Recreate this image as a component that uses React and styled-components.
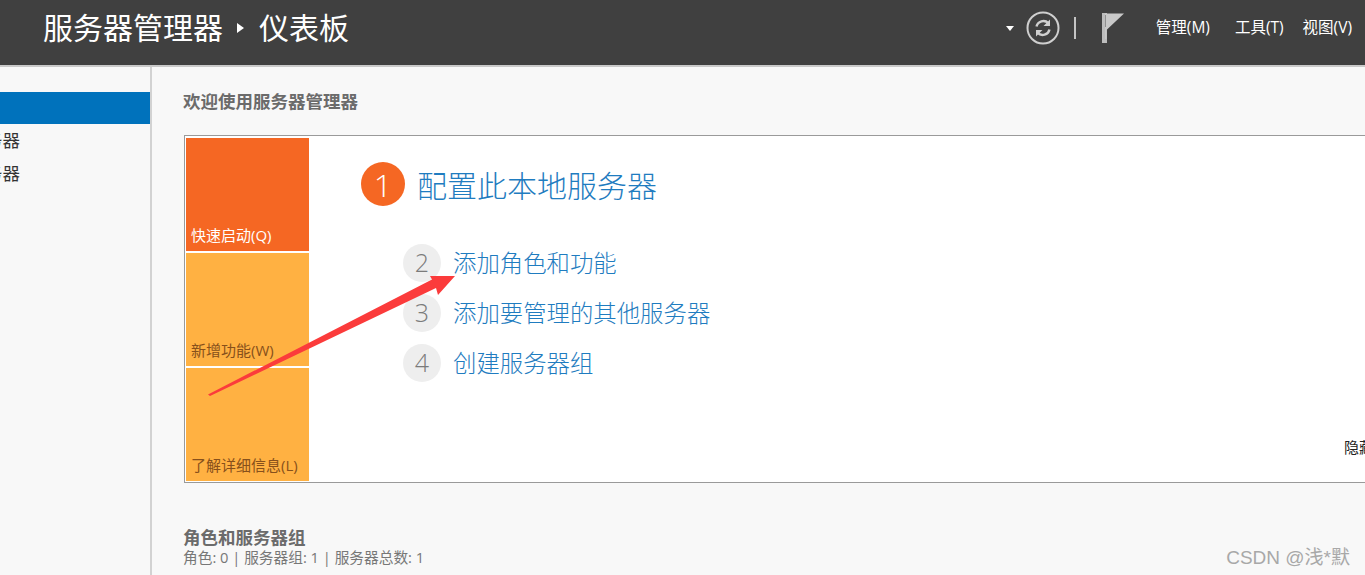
import React from 'react';
import styled, { createGlobalStyle } from 'styled-components';

const Global = createGlobalStyle`
  html, body { margin: 0; padding: 0; overflow: hidden; background: #f8f8f8; }
  body { font-family: "Open Sans", "Noto Sans CJK SC", sans-serif; }
`;

const Page = styled.div`
  position: relative;
  width: 1365px;
  height: 575px;
  overflow: hidden;
  display: flex;
  flex-direction: column;
`;

const Header = styled.header`
  flex: none;
  height: 55px;
  background: #404040;
  border-bottom: 2px solid #c9c9c9;
  display: flex;
  align-items: center;
  padding: 0 13px 10px 43px;
  color: #fff;
`;

const Crumb = styled.div`
  display: flex;
  align-items: center;
  font-size: 30px;
  line-height: 40px;
`;

const CrumbArrow = styled.span`
  width: 0;
  height: 0;
  margin: 0 15px 0 14px;
  border-left: 7px solid #fff;
  border-top: 5px solid transparent;
  border-bottom: 5px solid transparent;
`;

const Tools = styled.div`
  margin-left: auto;
  display: flex;
  align-items: center;
`;

const Caret = styled.span`
  width: 0;
  height: 0;
  margin: 2px 12px 0 0;
  border-top: 5px solid #fff;
  border-left: 4.5px solid transparent;
  border-right: 4.5px solid transparent;
`;

const Divider = styled.span`
  width: 2px;
  height: 22px;
  margin: 0 26px 0 14px;
  background: #c4c4c4;
`;

const Menu = styled.span`
  font-size: 15.5px;
  line-height: 20px;
  padding-bottom: 2px;
  color: #fff;
  white-space: nowrap;
  margin-left: ${({ $gap }) => $gap}px;
`;

const Body = styled.div`
  flex: 1;
  min-height: 0;
  display: flex;
`;

const Sidebar = styled.nav`
  flex: none;
  width: 150px;
  border-right: 2px solid #d2d2d2;
  padding-top: 25px;
  overflow: hidden;
`;

const NavRow = styled.div`
  height: ${({ $active }) => ($active ? 32 : 33)}px;
  padding: 0 130px 2px 0;
  box-sizing: border-box;
  display: flex;
  align-items: center;
  justify-content: flex-end;
  font-size: 17.5px;
  color: #333;
  white-space: nowrap;
  background: ${({ $active }) => ($active ? '#0072bc' : 'transparent')};
`;

const Main = styled.main`
  flex: 1;
  min-width: 0;
  padding: 22px 0 0 32px;
  overflow: hidden;
`;

const SectionTitle = styled.h2`
  margin: 0 0 0 -1px;
  font-size: 17.5px;
  line-height: 24px;
  font-weight: 700;
  color: #6b6b6b;
`;

const Card = styled.section`
  width: 1300px;
  height: 344px;
  margin: 22px 0 43px;
  padding: 2px 0 0 1px;
  background: #fff;
  border: 1px solid #9a9a9a;
  display: flex;
`;

const Tiles = styled.div`
  flex: none;
  width: 123px;
  display: flex;
  flex-direction: column;
  gap: 2px;
`;

const Tile = styled.div`
  height: 113px;
  box-sizing: border-box;
  padding: 0 0 6px 5px;
  display: flex;
  align-items: flex-end;
  font-size: 15px;
  line-height: 20px;
  white-space: nowrap;
  background: ${({ $primary }) => ($primary ? '#f56723' : '#ffb142')};
  color: ${({ $primary }) => ($primary ? '#fff' : '#87501b')};
`;

const Content = styled.div`
  flex: 1;
  padding: 24px 0 0 52px;
`;

const Lead = styled.div`
  display: flex;
  align-items: flex-start;
  gap: 12px;
  margin-bottom: 36px;
`;

const LeadNumber = styled.span`
  width: 44px;
  height: 44px;
  border-radius: 50%;
  background: #f56723;
  color: #fff;
  display: flex;
  align-items: center;
  justify-content: center;
  font-size: 32px;
  font-weight: 300;
`;

const LeadText = styled.span`
  font-size: 30px;
  line-height: 44px;
  margin-top: 2px;
  font-weight: 300;
  color: #1f7cc0;
`;

const Steps = styled.div`
  display: flex;
  flex-direction: column;
  gap: 12px;
  margin-left: 42px;
`;

const Step = styled.div`
  display: flex;
  align-items: center;
  gap: 12px;
  height: 38px;
`;

const StepNumber = styled.span`
  width: 38px;
  height: 38px;
  box-sizing: border-box;
  padding-bottom: 3px;
  border-radius: 50%;
  background: #eeeeee;
  color: #7b7b7b;
  display: flex;
  align-items: center;
  justify-content: center;
  font-size: 25px;
  font-weight: 300;
`;

const StepText = styled.span`
  font-size: 23.4px;
  line-height: 38px;
  font-weight: 300;
  color: #1f7cc0;
  white-space: nowrap;
`;

const HideLink = styled.div`
  margin: 55px 0 0 983px;
  font-size: 15px;
  line-height: 20px;
  color: #222;
  white-space: nowrap;
`;

const GroupTitle = styled(SectionTitle)`
  line-height: 23px;
`;

const GroupStats = styled.div`
  margin-left: -1px;
  font-size: 14.7px;
  line-height: 16px;
  color: #777;
  white-space: nowrap;
`;

const Annotation = styled.svg`
  position: absolute;
  left: 0;
  top: 0;
  pointer-events: none;
`;

const Watermark = styled.div`
  position: absolute;
  right: 15px;
  bottom: 5px;
  font-size: 19px;
  line-height: 24px;
  font-family: "Liberation Sans", "Noto Sans CJK SC", sans-serif;
  color: #a8a8a8;
`;

function RefreshIcon() {
  return (
    <svg width="34" height="34" viewBox="0 0 34 34" fill="none">
      <circle cx="17" cy="17" r="15.5" stroke="#cfcfcf" strokeWidth="2" />
      <path d="M10.5 15.5a7 7 0 0 1 11.8-3.4" stroke="#cfcfcf" strokeWidth="2.4" />
      <path d="M23.5 18.5a7 7 0 0 1-11.8 3.4" stroke="#cfcfcf" strokeWidth="2.4" />
      <path d="M24 8.5v6.5h-6.5z" fill="#cfcfcf" />
      <path d="M10 25.5V19h6.5z" fill="#cfcfcf" />
    </svg>
  );
}

function FlagIcon() {
  return (
    <svg width="22" height="30" viewBox="0 0 22 30">
      <rect x="0" y="0" width="5" height="30" fill="#bdbdbd" />
      <path d="M3 0.5H22L4.5 17V26H3z" fill="#c9c9c9" />
      <rect x="3" y="2" width="1" height="12" fill="#8f8f8f" />
    </svg>
  );
}

const steps = [
  ['2', '添加角色和功能'],
  ['3', '添加要管理的其他服务器'],
  ['4', '创建服务器组'],
];

export default function App() {
  return (
    <Page>
      <Global />
      <Header>
        <Crumb>
          服务器管理器
          <CrumbArrow />
          仪表板
        </Crumb>
        <Tools>
          <Caret />
          <RefreshIcon />
          <Divider />
          <FlagIcon />
          <Menu $gap={32}>管理(M)</Menu>
          <Menu $gap={25}>工具(T)</Menu>
          <Menu $gap={19}>视图(V)</Menu>
        </Tools>
      </Header>
      <Body>
        <Sidebar>
          <NavRow $active />
          <NavRow>本地服务器</NavRow>
          <NavRow>所有服务器</NavRow>
        </Sidebar>
        <Main>
          <SectionTitle>欢迎使用服务器管理器</SectionTitle>
          <Card>
            <Tiles>
              <Tile $primary>快速启动(Q)</Tile>
              <Tile>新增功能(W)</Tile>
              <Tile>了解详细信息(L)</Tile>
            </Tiles>
            <Content>
              <Lead>
                <LeadNumber>1</LeadNumber>
                <LeadText>配置此本地服务器</LeadText>
              </Lead>
              <Steps>
                {steps.map(([n, label]) => (
                  <Step key={n}>
                    <StepNumber>{n}</StepNumber>
                    <StepText>{label}</StepText>
                  </Step>
                ))}
              </Steps>
              <HideLink>隐藏欢迎屏幕</HideLink>
            </Content>
          </Card>
          <GroupTitle>角色和服务器组</GroupTitle>
          <GroupStats>角色: 0 | 服务器组: 1 | 服务器总数: 1</GroupStats>
        </Main>
      </Body>
      <Annotation width="1365" height="575" viewBox="0 0 1365 575">
        <path d="M208 394.5L432 279.5L430 276H455L438 295L436 288L210 396Z" fill="#fb3b3b" />
      </Annotation>
      <Watermark>CSDN @浅*默</Watermark>
    </Page>
  );
}
